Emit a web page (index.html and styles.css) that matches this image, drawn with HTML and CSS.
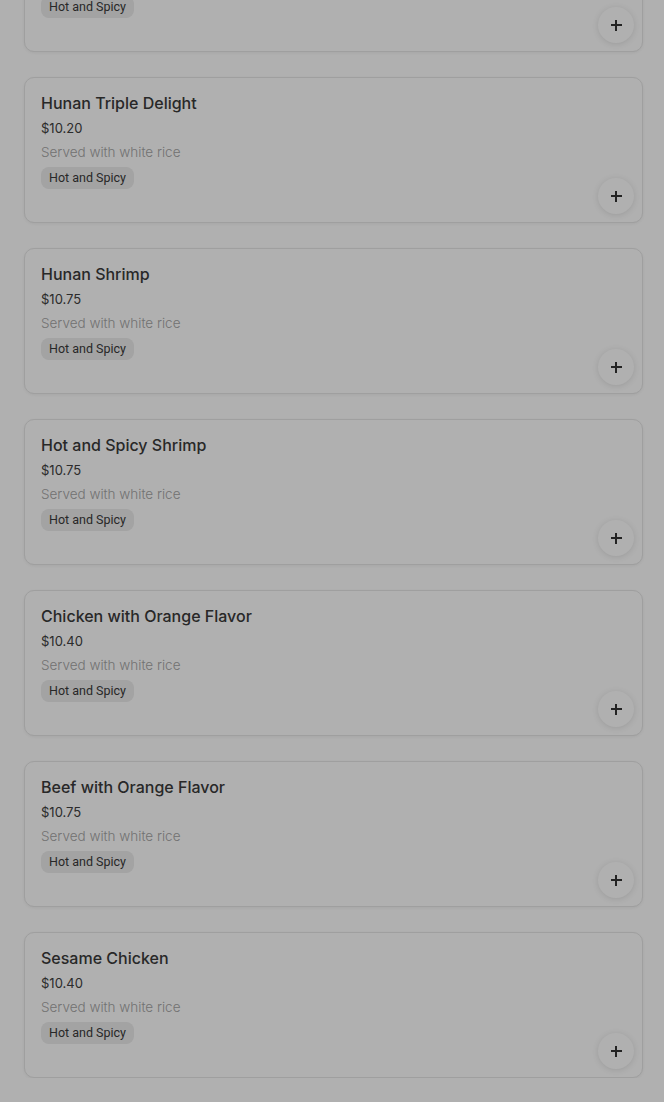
FILE: index.html
```html
<!DOCTYPE html>
<html lang="en">
<head>
    <meta charset="UTF-8">
    <meta name="viewport" content="width=device-width, initial-scale=1.0">
    <title>Menu</title>
    <link rel="stylesheet" href="styles.css">
</head>
<body>
    <div class="menu-list">
        <div class="item-card">
            <div class="item-info">
                <h3 class="item-name">General Tso's Chicken</h3>
                <div class="item-price">$10.40</div>
                <div class="item-desc">Served with white rice</div>
                <span class="item-tag">Hot and Spicy</span>
            </div>
            <button class="add-btn"><span class="plus"></span></button>
        </div>
        <div class="item-card">
            <div class="item-info">
                <h3 class="item-name">Hunan Triple Delight</h3>
                <div class="item-price">$10.20</div>
                <div class="item-desc">Served with white rice</div>
                <span class="item-tag">Hot and Spicy</span>
            </div>
            <button class="add-btn"><span class="plus"></span></button>
        </div>
        <div class="item-card">
            <div class="item-info">
                <h3 class="item-name">Hunan Shrimp</h3>
                <div class="item-price">$10.75</div>
                <div class="item-desc">Served with white rice</div>
                <span class="item-tag">Hot and Spicy</span>
            </div>
            <button class="add-btn"><span class="plus"></span></button>
        </div>
        <div class="item-card">
            <div class="item-info">
                <h3 class="item-name">Hot and Spicy Shrimp</h3>
                <div class="item-price">$10.75</div>
                <div class="item-desc">Served with white rice</div>
                <span class="item-tag">Hot and Spicy</span>
            </div>
            <button class="add-btn"><span class="plus"></span></button>
        </div>
        <div class="item-card">
            <div class="item-info">
                <h3 class="item-name">Chicken with Orange Flavor</h3>
                <div class="item-price">$10.40</div>
                <div class="item-desc">Served with white rice</div>
                <span class="item-tag">Hot and Spicy</span>
            </div>
            <button class="add-btn"><span class="plus"></span></button>
        </div>
        <div class="item-card">
            <div class="item-info">
                <h3 class="item-name">Beef with Orange Flavor</h3>
                <div class="item-price">$10.75</div>
                <div class="item-desc">Served with white rice</div>
                <span class="item-tag">Hot and Spicy</span>
            </div>
            <button class="add-btn"><span class="plus"></span></button>
        </div>
        <div class="item-card">
            <div class="item-info">
                <h3 class="item-name">Sesame Chicken</h3>
                <div class="item-price">$10.40</div>
                <div class="item-desc">Served with white rice</div>
                <span class="item-tag">Hot and Spicy</span>
            </div>
            <button class="add-btn"><span class="plus"></span></button>
        </div>
    </div>
    <!-- dimmed backdrop behind an open dialog -->
    <div class="backdrop"></div>
</body>
</html>
```
FILE: styles.css
```css
body {
    font-family: Roboto, "Liberation Sans", sans-serif;
    margin: 0;
    padding: 0;
    background-color: #fff;
    overflow: hidden;
}
.menu-list {
    display: flex;
    flex-direction: column;
    gap: 25px;
    margin: -94px 21px 0 24px;
}
.item-card {
    display: grid;
    grid-template-columns: 1fr auto;
    height: 146px;
    box-sizing: border-box;
    padding: 15px 16px 0 16px;
    border: 1px solid #e6e6e6;
    border-radius: 10px;
    background-color: #fff;
    box-shadow: 0 1px 3px rgba(0,0,0,0.06);
}
.item-info {
    display: flex;
    flex-direction: column;
    align-items: flex-start;
}
.item-name {
    margin: 0;
    font-family: Inter, Roboto, sans-serif;
    font-size: 16px;
    font-weight: 500;
    line-height: 20px;
    color: #3a3a3a;
}
.item-price {
    margin-top: 5px;
    font-family: Inter, Roboto, sans-serif;
    font-size: 13px;
    line-height: 20px;
    color: #404040;
}
.item-desc {
    margin-top: 4px;
    font-family: Inter, Roboto, sans-serif;
    font-size: 13.5px;
    font-weight: 300;
    line-height: 20px;
    color: #a6a6a6;
}
.item-tag {
    margin-top: 5px;
    padding: 0 8px;
    height: 22px;
    line-height: 22px;
    font-size: 12.5px;
    color: #3a3a3a;
    background-color: #ececec;
    border-radius: 8px;
}
.add-btn {
    align-self: end;
    display: flex;
    align-items: center;
    justify-content: center;
    width: 36px;
    height: 36px;
    margin: 0 -8px 8px 0;
    padding: 0;
    border: none;
    border-radius: 50%;
    background-color: #fff;
    box-shadow: 0 1px 6px rgba(0,0,0,0.12);
    cursor: pointer;
}
.plus {
    position: relative;
    width: 11px;
    height: 11px;
}
.plus::before,
.plus::after {
    content: "";
    position: absolute;
    background-color: #333;
}
.plus::before {
    left: 0;
    top: 4.5px;
    width: 11px;
    height: 2px;
}
.plus::after {
    left: 4.5px;
    top: 0;
    width: 2px;
    height: 11px;
}
.backdrop {
    position: fixed;
    inset: 0;
    background-color: rgba(0,0,0,0.31);
}
```
